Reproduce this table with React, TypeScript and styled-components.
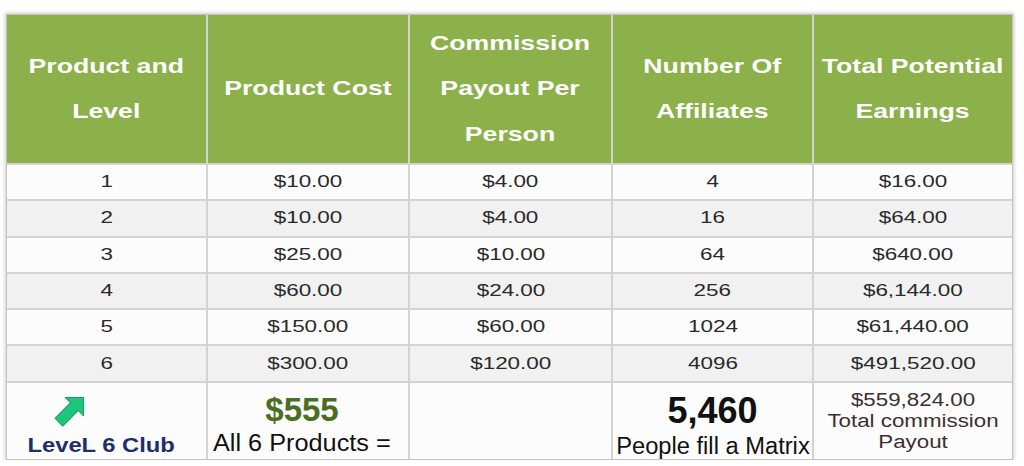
import styled, { createGlobalStyle } from 'styled-components';

const GlobalStyle = createGlobalStyle`
  html, body {
    margin: 0;
    background: #ffffff;
  }
  body {
    font-family: "Liberation Sans", Arial, sans-serif;
  }
`;

const Page = styled.div`
  padding: 14px 0 0 6px;
`;

const Grid = styled.div`
  width: 1007px;
  box-sizing: border-box;
  display: grid;
  grid-template-columns: 199px 200px 201px 199px 198px;
  grid-template-rows: 148px repeat(6, 34.3px) 76px;
  gap: 2px;
  background: #d3d3d3;
  border: 1px solid #c2c2c2;
  box-shadow: 0 0 4px 1px rgba(0, 0, 0, 0.2);
`;

const HeadCell = styled.div`
  background: #8cb04a;
  color: #ffffff;
  font-weight: 700;
  font-size: 21px;
  line-height: 45.5px;
  display: flex;
  align-items: center;
  justify-content: center;
  text-align: center;
  padding-bottom: 2px;
`;

const Cell = styled.div<{ $shade: boolean }>`
  background: ${p => (p.$shade ? '#f1f1f1' : '#fcfcfc')};
  color: #2a2a2a;
  font-size: 17px;
  display: flex;
  align-items: center;
  justify-content: center;
`;

const FootCell = styled.div<{ $top: number; $shift?: number }>`
  background: #fcfcfc;
  display: flex;
  flex-direction: column;
  align-items: center;
  padding-top: ${p => p.$top}px;
  padding-right: ${p => p.$shift ?? 0}px;
  overflow: visible;
  white-space: nowrap;
`;

const Stretch = styled.span<{ $x: number }>`
  display: inline-block;
  transform: scaleX(${p => p.$x});
`;

const ClubArrow = styled.svg`
  align-self: flex-start;
  margin-left: 46px;
  width: 40px;
  height: 40px;
`;

const ClubLabel = styled.div`
  margin-top: 5px;
  color: #1c2f6b;
  font-weight: 700;
  font-size: 21px;
  line-height: 24px;
`;

const BigFigure = styled.div<{ $color: string; $size: number }>`
  color: ${p => p.$color};
  font-weight: 700;
  font-size: ${p => p.$size}px;
  line-height: ${p => p.$size}px;
`;

const Caption = styled.div`
  margin-top: 5px;
  color: #111111;
  font-size: 23px;
  line-height: 24px;
`;

const PayoutText = styled.div`
  color: #3d2f2f;
  font-size: 18px;
  line-height: 21px;
  text-align: center;
`;

const headers = [
  ['Product and', 'Level'],
  ['Product Cost'],
  ['Commission', 'Payout Per', 'Person'],
  ['Number Of', 'Affiliates'],
  ['Total Potential', 'Earnings'],
];

const rows = [
  ['1', '$10.00', '$4.00', '4', '$16.00'],
  ['2', '$10.00', '$4.00', '16', '$64.00'],
  ['3', '$25.00', '$10.00', '64', '$640.00'],
  ['4', '$60.00', '$24.00', '256', '$6,144.00'],
  ['5', '$150.00', '$60.00', '1024', '$61,440.00'],
  ['6', '$300.00', '$120.00', '4096', '$491,520.00'],
];

export default function App() {
  return (
    <Page>
      <GlobalStyle />
      <Grid>
        {headers.map((lines, i) => (
          <HeadCell key={`h${i}`}>
            <Stretch $x={1.27}>
              {lines.map((l, j) => (
                <div key={j}>{l}</div>
              ))}
            </Stretch>
          </HeadCell>
        ))}

        {rows.map((row, r) =>
          row.map((value, c) => (
            <Cell key={`${r}-${c}`} $shade={r % 2 === 1}>
              <Stretch $x={1.32}>{value}</Stretch>
            </Cell>
          ))
        )}

        <FootCell $top={5} $shift={10}>
          <ClubArrow viewBox="-20 -20 40 40">
            <g transform="rotate(-45)">
              <polygon
                points="-20,-5.5 2,-5.5 2,-13 15,0 2,13 2,5.5 -20,5.5"
                fill="#1fc57b"
                stroke="#14a062"
                strokeWidth="1"
                strokeLinejoin="round"
              />
            </g>
          </ClubArrow>
          <ClubLabel>
            <Stretch $x={1.13}>LeveL 6 Club</Stretch>
          </ClubLabel>
        </FootCell>

        <FootCell $top={10} $shift={12}>
          <BigFigure $color="#4a6e22" $size={33}>$555</BigFigure>
          <Caption>
            <Stretch $x={1.1}>All 6 Products =</Stretch>
          </Caption>
        </FootCell>

        <FootCell $top={0} />

        <FootCell $top={10}>
          <BigFigure $color="#111111" $size={36}>5,460</BigFigure>
          <Caption>
            <Stretch $x={1.03}>People fill a Matrix</Stretch>
          </Caption>
        </FootCell>

        <FootCell $top={7}>
          <PayoutText>
            <Stretch $x={1.24}>
              <div>$559,824.00</div>
              <div>Total commission</div>
              <div>Payout</div>
            </Stretch>
          </PayoutText>
        </FootCell>
      </Grid>
    </Page>
  );
}
